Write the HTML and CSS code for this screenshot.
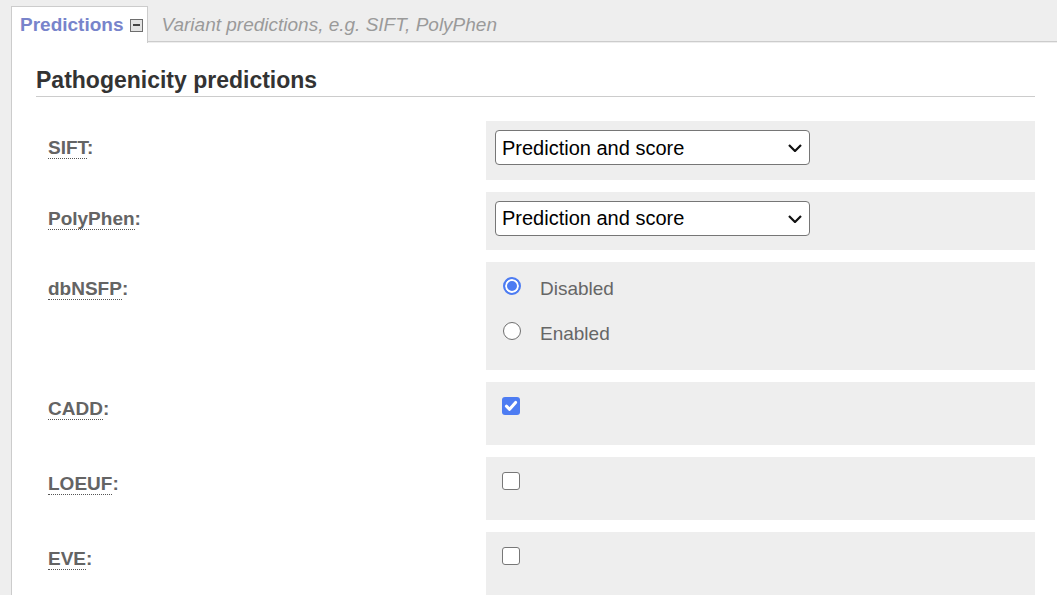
FILE: index.html
```html
<!DOCTYPE html>
<html lang="en">
<head>
<meta charset="utf-8">
<title>Predictions</title>
<link rel="stylesheet" href="styles.css">
</head>
<body>
<div class="tabs">
  <div class="tab">
    <span class="tab-title">Predictions</span>
    <span class="collapse" aria-label="collapse"><span class="minus"></span></span>
  </div>
  <div class="tab-rest"><span class="tab-desc">Variant predictions, e.g. SIFT, PolyPhen</span></div>
</div>
<div class="panel">
  <h2 class="section-title">Pathogenicity predictions</h2>
  <div class="rows">
    <div class="row">
      <div class="label"><span class="term">SIFT</span>:</div>
      <div class="value value-select">
        <span class="select-wrap">
          <select class="select"><option>Prediction and score</option></select>
          <svg class="chevron" width="14" height="8" viewBox="0 0 14 8"><path d="M1 1 L7 7 L13 1" fill="none" stroke="#111" stroke-width="2.2"/></svg>
        </span>
      </div>
    </div>
    <div class="row">
      <div class="label"><span class="term">PolyPhen</span>:</div>
      <div class="value value-select">
        <span class="select-wrap">
          <select class="select"><option>Prediction and score</option></select>
          <svg class="chevron" width="14" height="8" viewBox="0 0 14 8"><path d="M1 1 L7 7 L13 1" fill="none" stroke="#111" stroke-width="2.2"/></svg>
        </span>
      </div>
    </div>
    <div class="row">
      <div class="label"><span class="term">dbNSFP</span>:</div>
      <div class="value">
        <div class="opt"><span class="radio checked" role="radio" aria-checked="true"></span><span class="opt-text">Disabled</span></div>
        <div class="opt"><span class="radio" role="radio" aria-checked="false"></span><span class="opt-text">Enabled</span></div>
      </div>
    </div>
    <div class="row">
      <div class="label"><span class="term">CADD</span>:</div>
      <div class="value">
        <div class="opt"><span class="check checked" role="checkbox" aria-checked="true"><svg width="18" height="18" viewBox="0 0 18 18"><path d="M4.4 9.2 L7.6 12.3 L13.6 5.4" fill="none" stroke="#fff" stroke-width="3" stroke-linecap="round" stroke-linejoin="round"/></svg></span></div>
      </div>
    </div>
    <div class="row">
      <div class="label"><span class="term">LOEUF</span>:</div>
      <div class="value">
        <div class="opt"><span class="check" role="checkbox" aria-checked="false"></span></div>
      </div>
    </div>
    <div class="row">
      <div class="label"><span class="term">EVE</span>:</div>
      <div class="value">
        <div class="opt"><span class="check" role="checkbox" aria-checked="false"></span></div>
      </div>
    </div>
  </div>
</div>
</body>
</html>
```
FILE: styles.css
```css
html, body {
  margin: 0;
  padding: 0;
}
body {
  background: #eeeeee;
  font-family: "Liberation Sans", Arial, sans-serif;
  font-size: 19px;
  line-height: 22px;
  color: #333;
  overflow: hidden;
}
.tabs {
  display: flex;
  margin-left: 11px;
  padding-top: 6px;
}
.tab {
  display: flex;
  align-items: center;
  height: 36px;
  padding: 0 4px 0 8px;
  background: #fff;
  border: 1px solid #ccc;
  border-bottom: none;
}
.tab-title {
  font-weight: bold;
  color: #7884cb;
}
.collapse {
  display: flex;
  align-items: center;
  justify-content: center;
  width: 11px;
  height: 11px;
  margin-left: 7px;
  border: 1px solid #6e6e6e;
  background: #e4e4e4;
}
.minus {
  width: 7px;
  height: 2px;
  background: #444;
}
.tab-rest {
  flex: 1;
  display: flex;
  align-items: center;
  height: 36px;
  padding-left: 13px;
  padding-top: 2px;
  box-sizing: border-box;
  border-bottom: 1px solid #ccc;
}
.tab-desc {
  font-style: italic;
  color: #9a9a9a;
}
.panel {
  margin-left: 11px;
  background: #fff;
  border-left: 1px solid #ccc;
  padding: 24px 22px 40px 24px;
}
.section-title {
  margin: 0;
  font-size: 23px;
  line-height: 27px;
  padding-bottom: 2px;
  border-bottom: 1px solid #ccc;
  color: #333;
  font-weight: bold;
}
.rows {
  display: flex;
  flex-direction: column;
  gap: 12px;
  margin-top: 24px;
}
.row {
  display: flex;
}
.label {
  width: 438px;
  padding-left: 12px;
  padding-top: 16px;
  font-weight: bold;
  color: #646464;
}
.term {
  border-bottom: 1px dotted #555;
}
.value {
  flex: 1;
  background: #eeeeee;
  padding: 9px 9px;
}
.select-wrap {
  display: inline-flex;
  position: relative;
  margin-bottom: 5.5px;
}
.select {
  appearance: none;
  -webkit-appearance: none;
  width: 315px;
  height: 35px;
  margin: 0;
  padding: 0 0 0 6px;
  font-family: "Liberation Sans", Arial, sans-serif;
  font-size: 20px;
  color: #000;
  background: #fff;
  border: 1px solid #767676;
  border-radius: 4px;
}
.chevron {
  position: absolute;
  right: 8px;
  top: 14px;
  pointer-events: none;
}
.opt {
  display: flex;
  align-items: flex-start;
  height: 45px;
  box-sizing: border-box;
  padding-top: 6px;
  padding-left: 8px;
}
.opt-text {
  margin-left: 19px;
  margin-top: 1px;
  color: #666;
}
.radio {
  box-sizing: border-box;
  width: 18px;
  height: 18px;
  border-radius: 50%;
  border: 1px solid #6f6f6f;
  background: #fff;
}
.radio.checked {
  border: 2px solid #4d7cf2;
  background: #4d7cf2;
  box-shadow: inset 0 0 0 2px #fff;
}
.check {
  box-sizing: border-box;
  display: block;
  width: 18px;
  height: 18px;
  margin-left: -1px;
  border-radius: 3px;
  border: 1px solid #777;
  background: #fff;
}
.check.checked {
  border: none;
  background: #4d7cf2;
}
.check svg {
  display: block;
}
```
